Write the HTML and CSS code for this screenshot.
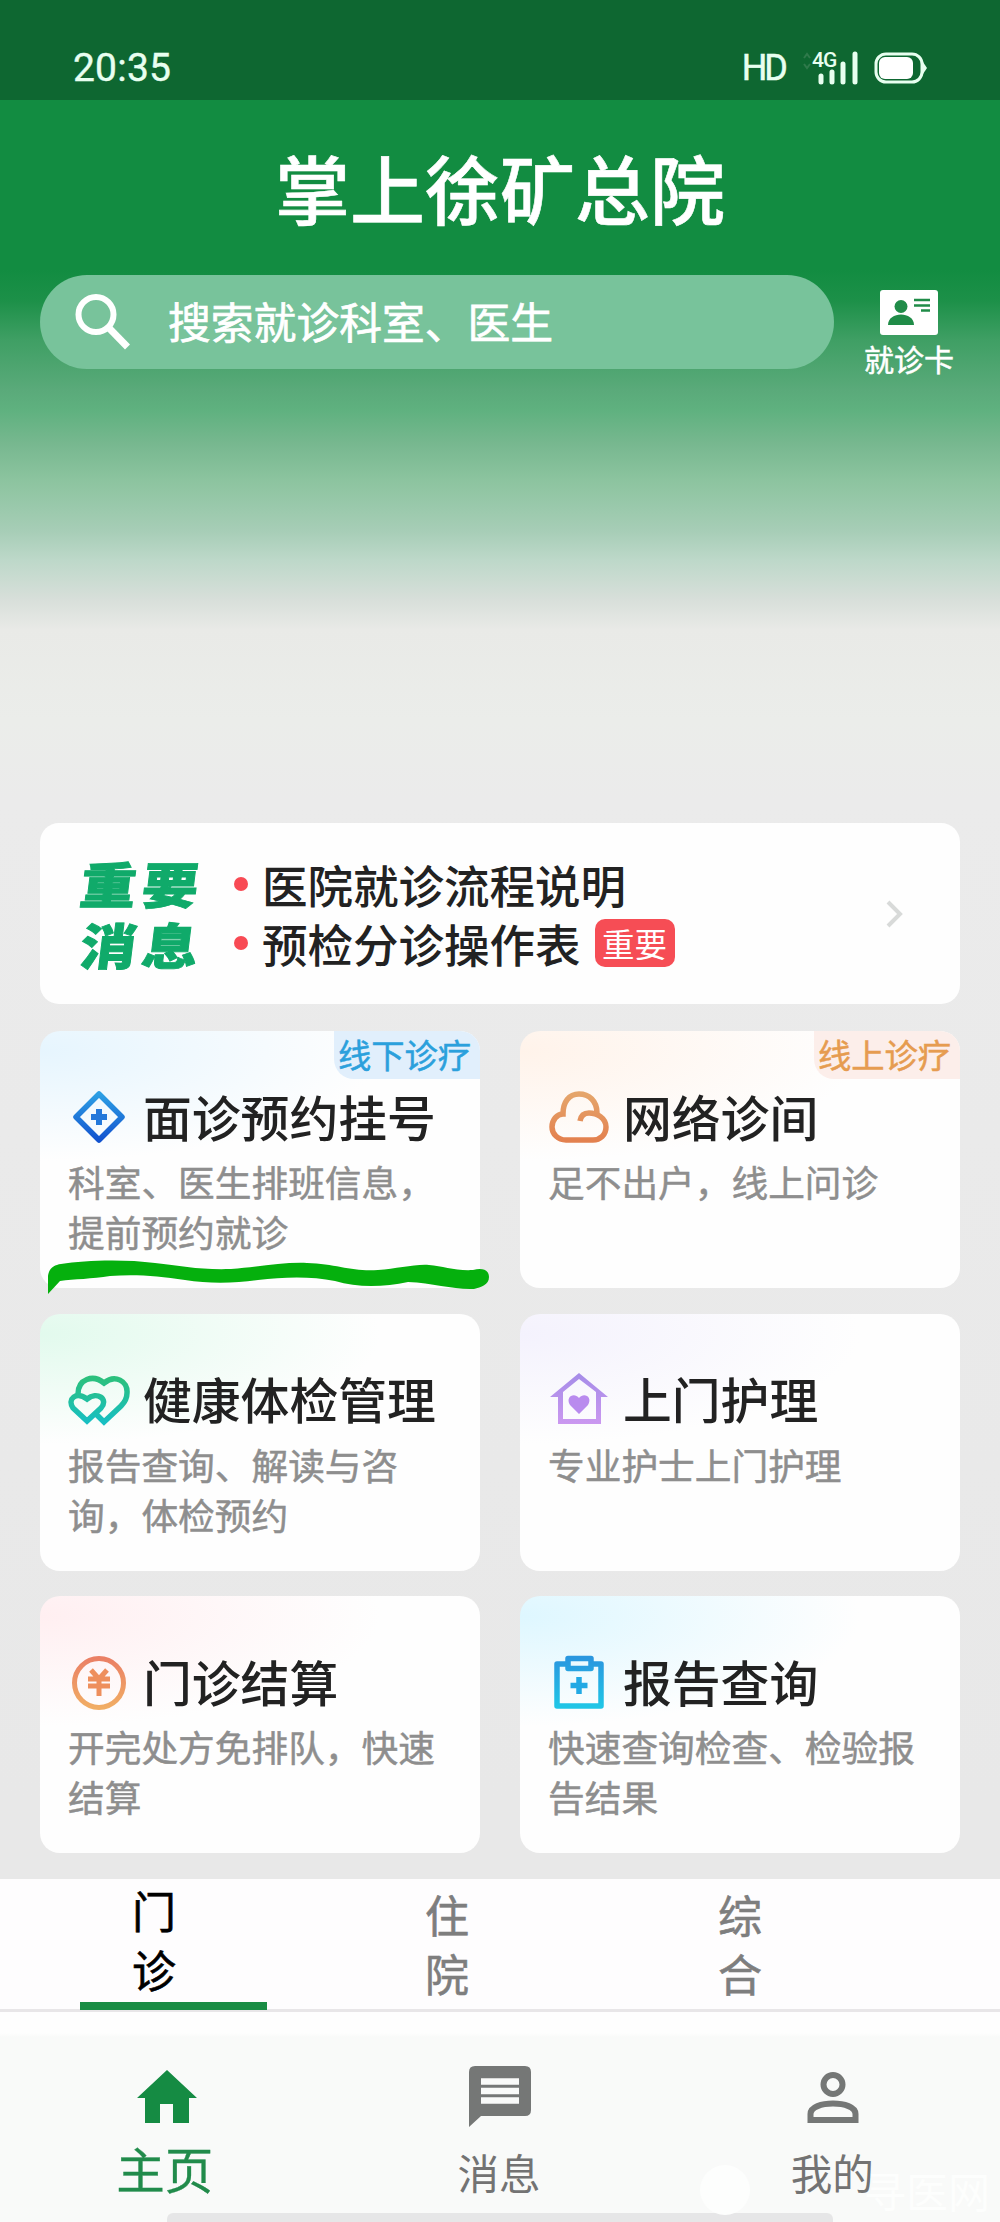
FILE: index.html
```html
<!DOCTYPE html>
<html lang="zh-CN">
<head>
<meta charset="utf-8">
<title>掌上徐矿总院</title>
<link rel="stylesheet" href="styles.css">
</head>
<body>
<div class="screen">
  <header class="status">
    <span class="clock">20:35</span>
    <span class="hd">HD</span>
    <svg class="signal" width="60" height="36" viewBox="0 0 60 36">
      <path d="M3 8l3-4 3 4M3 14l3 4 3-4" fill="none" stroke="#2f7a4b" stroke-width="2"/>
      <text x="11" y="17" class="net">4G</text>
      <path d="M20 26v6M31 22v10M42 14v18M54 4v28" stroke="#e8fff0" stroke-width="5" stroke-linecap="round"/>
    </svg>
    <svg class="battery" width="54" height="34" viewBox="0 0 54 34">
      <rect x="2" y="3" width="46" height="28" rx="10" fill="none" stroke="#e8fff0" stroke-width="3"/>
      <rect x="5" y="6" width="34" height="22" rx="6" fill="#fff"/>
      <path d="M49 11l4 6-4 6z" fill="#e8fff0"/>
    </svg>
  </header>

  <section class="hero">
    <h1>掌上徐矿总院</h1>
    <div class="search-row">
      <div class="search">
        <svg width="58" height="58" viewBox="0 0 58 58" fill="none" stroke="#fff" stroke-width="6">
          <circle cx="22" cy="21.500" r="17.500"/><path d="M35 35l18.500 19" stroke-width="7"/>
        </svg>
        <span>搜索就诊科室、医生</span>
      </div>
      <div class="card-link">
        <svg width="60" height="46" viewBox="0 0 60 46">
          <rect x="1" width="58" height="45" rx="3" fill="#fff"/>
          <circle cx="22" cy="16.500" r="6.500" fill="#208c48"/>
          <path d="M9 35c0-14 26-14 26 0z" fill="#208c48"/>
          <path d="M35 10h16M35 15.500h16M42 20.500h9" stroke="#208c48" stroke-width="2.500"/>
        </svg>
        <span>就诊卡</span>
      </div>
    </div>
  </section>

  <main class="content">
    <section class="notice">
      <div class="notice-title"><span>重要</span><span>消息</span></div>
      <ul class="notice-list">
        <li>医院就诊流程说明</li>
        <li>预检分诊操作表<b class="badge">重要</b></li>
      </ul>
      <svg class="chevron" width="20" height="28" viewBox="0 0 20 28"><path d="M3 2l12 12L3 26" fill="none" stroke="#d8dad9" stroke-width="4"/></svg>
    </section>

    <section class="grid">
      <article class="tile blue">
        <span class="tag">线下诊疗</span>
        <div class="tile-head">
          <svg width="62" height="56" viewBox="0 0 62 56">
            <defs><linearGradient id="g1" x1="0" y1="0" x2="0" y2="1"><stop offset="0" stop-color="#2d9fe4"/><stop offset="1" stop-color="#1253cf"/></linearGradient></defs>
            <path d="M31 5L54 28 31 51 8 28z" fill="none" stroke="url(#g1)" stroke-width="5.500" stroke-linejoin="round"/>
            <path d="M31 20v16M23 28h16" stroke="#2478da" stroke-width="6"/>
          </svg>
          <h2>面诊预约挂号</h2>
        </div>
        <p>科室、医生排班信息，<br>提前预约就诊</p>
        <svg class="marker" width="446" height="36" viewBox="0 0 446 36"><path d="M1 35V17C2 9 7 6 14 5C38 1 78 0 108 4C134 7 153 11 184 10C213 8 236 3 260 4C290 5 306 13 331 11C350 10 367 5 382 6C396 7 408 12 426 11C437 8 442 12 442 18C442 26 434 28 427 30C407 31 387 24 361 23C337 28 311 29 288 22C264 17 236 18 211 21C190 24 163 25 138 21C111 17 89 15 63 17C45 20 27 20 13 22Z" fill="#05b00d"/></svg>
      </article>
      <article class="tile orange">
        <span class="tag">线上诊疗</span>
        <div class="tile-head">
          <svg width="62" height="56" viewBox="0 0 62 56" fill="none">
            <defs><linearGradient id="g2" x1="0" y1="0" x2="0" y2="1"><stop offset="0" stop-color="#e5a56b"/><stop offset="1" stop-color="#e3814f"/></linearGradient></defs>
            <path d="M32 32C33 26 37 24 41 24C49 24 58 29 58 38C58 46 52 51 45 51H18C10 51 4 45 4 38C4 31 9 25 15 25C15 13 21 5 31 5C41 5 49 12 49 24" stroke="url(#g2)" stroke-width="5.500"/>
          </svg>
          <h2>网络诊间</h2>
        </div>
        <p>足不出户，线上问诊</p>
      </article>
      <article class="tile green">
        <div class="tile-head">
          <svg width="62" height="56" viewBox="0 0 62 56" fill="none">
            <defs><linearGradient id="g3" x1="0" y1="0" x2="0" y2="1"><stop offset="0" stop-color="#2bc07d"/><stop offset="1" stop-color="#17bfc2"/></linearGradient></defs>
            <path d="M10 22C10 7 25 2 36 11C47 2 60 9 59 21C59 26 56 31 53 34L36 50L29 43M19 49L5 36C-1 27 8 19 19 27C29 19 41 27 33 36Z" stroke="url(#g3)" stroke-width="5.500"/>
          </svg>
          <h2>健康体检管理</h2>
        </div>
        <p>报告查询、解读与咨询，体检预约</p>
      </article>
      <article class="tile purple">
        <div class="tile-head">
          <svg width="62" height="56" viewBox="0 0 62 56">
            <defs><linearGradient id="g4" x1="0" y1="0" x2="0" y2="1"><stop offset="0" stop-color="#a58ce8"/><stop offset="1" stop-color="#cb98f0"/></linearGradient></defs>
            <path d="M31 1L60 25H53V52H10V25H2zM31 7L15 20V47H48V20z" fill="url(#g4)" fill-rule="evenodd"/>
            <path d="M31 42L22 33C17 25 26 20 31 26C36 20 45 25 40 33z" fill="#b98bee"/>
          </svg>
          <h2>上门护理</h2>
        </div>
        <p>专业护士上门护理</p>
      </article>
      <article class="tile red">
        <div class="tile-head">
          <svg width="62" height="56" viewBox="0 0 62 56" fill="none">
            <defs><linearGradient id="g5" x1="0" y1="0" x2="0" y2="1"><stop offset="0" stop-color="#ea8065"/><stop offset="1" stop-color="#f1ad64"/></linearGradient></defs>
            <circle cx="31" cy="29" r="24.500" stroke="url(#g5)" stroke-width="5"/>
            <path d="M23 16l8 9 8-9M20 25h22M20 32h22M31 25v17" stroke="#ee8f5c" stroke-width="5"/>
          </svg>
          <h2>门诊结算</h2>
        </div>
        <p>开完处方免排队，快速结算</p>
      </article>
      <article class="tile cyan">
        <div class="tile-head">
          <svg width="62" height="56" viewBox="0 0 62 56" fill="none">
            <defs><linearGradient id="g6" x1="0" y1="0" x2="0" y2="1"><stop offset="0" stop-color="#2a97df"/><stop offset="1" stop-color="#20c5e6"/></linearGradient></defs>
            <path d="M18 10H9V52H53V10H44M20 4.500H43V14.500H20z" stroke="url(#g6)" stroke-width="5.500" stroke-linejoin="round"/>
            <path d="M31 23v17M22.500 31.500h17" stroke="#22a9e4" stroke-width="5.500"/>
          </svg>
          <h2>报告查询</h2>
        </div>
        <p>快速查询检查、检验报告结果</p>
      </article>
    </section>
  </main>

  <nav class="tabs">
    <span class="tab active">门<br>诊</span>
    <span class="tab">住<br>院</span>
    <span class="tab">综<br>合</span>
  </nav>

  <footer class="bottom-nav">
    <div class="nav-item on">
      <svg width="62" height="62" viewBox="0 0 62 62"><path d="M31 4L61 32H53V57H37V38H24V57H9V32H1z" fill="#158b43"/></svg>
      <span>主页</span>
    </div>
    <div class="nav-item">
      <svg width="62" height="62" viewBox="0 0 62 62"><path d="M6 0H56Q62 0 62 6V44Q62 50 56 50H12L0 61V6Q0 0 6 0z" fill="#757776"/><path d="M12 15.500H50M12 25H50M12 34.500H50" stroke="#f9faf9" stroke-width="6.500"/></svg>
      <span>消息</span>
    </div>
    <div class="nav-item">
      <svg width="62" height="62" viewBox="0 0 62 62" fill="none" stroke="#757776" stroke-width="6"><circle cx="31" cy="18.500" r="9.500"/><path d="M8.500 54V48C8.500 34 53.500 34 53.500 48V54z"/></svg>
      <span>我的</span>
    </div>
    <i class="home-bar"></i>
    <div class="watermark"><i></i><span>寻医网</span></div>
  </footer>
</div>
</body>
</html>
```

FILE: styles.css
```css
* { box-sizing: border-box; }
body {
  margin: 0;
  font-family: "Noto Sans CJK SC", sans-serif;
  color: #222;
}
h1, h2, p, ul { margin: 0; padding: 0; }
svg { display: block; flex: none; }
.screen {
  width: 1000px;
  height: 2222px;
  display: flex;
  flex-direction: column;
  overflow: hidden;
  background: linear-gradient(#128c41 0, #128c41 270px, #1c9048 300px, #3f9f64 340px, #5aaa7a 390px, #5fb17f 410px, #78b890 445px, #8cc49f 480px, #a6cdb6 530px, #bdd8c9 560px, #d8dfda 600px, #e9eae7 630px, #ebedea 720px, #ebebeb 800px, #e8e8e8 1800px);
}

.status {
  height: 100px;
  flex: none;
  display: flex;
  align-items: center;
  padding: 36px 72px 0 73px;
  background: #0e6731;
  color: #e8fff0;
  font-family: Roboto, sans-serif;
}
.clock { flex: 1; font-size: 39px; letter-spacing: .2px; -webkit-text-stroke: .4px; }
.hd { font-size: 36px; margin-right: 13px; letter-spacing: -3px; padding-right: 3px; -webkit-text-stroke: .5px; }
.signal { margin-right: 13px; }
.net { font: 500 21px/1 Roboto, sans-serif; fill: #e8fff0; letter-spacing: -1px; }

.hero { height: 723px; flex: none; padding-top: 45px; color: #fff; }
h1 { text-align: center; font-size: 75px; line-height: 84px; font-weight: 500; padding-left: 0; -webkit-text-stroke: .6px; }
.search-row { display: flex; margin-top: 46px; padding-left: 40px; }
.search {
  width: 794px;
  height: 94px;
  border-radius: 47px;
  background: #78c39b;
  display: flex;
  align-items: center;
  gap: 36px;
  padding-left: 34px;
  font-size: 42.800px;
  -webkit-text-stroke: .7px;
}
.search span { line-height: 60px; padding-bottom: 5px; }
.card-link { width: 150px; display: flex; flex-direction: column; align-items: center; padding-top: 15px; font-size: 30px; line-height: 44px; -webkit-text-stroke: .5px; }

.content { padding: 0 40px; height: 1056px; flex: none; }
.notice {
  height: 181px;
  border-radius: 19px;
  background: #fefefe;
  display: flex;
  align-items: center;
  padding: 0 55px 0 41px;
}
.notice-title { display: flex; flex-direction: column; width: 153px; }
.notice-title span {
  width: 124px;
  font-size: 56px;
  line-height: 61px;
  font-weight: 900;
  letter-spacing: 6px;
  color: #10aa6a;
  -webkit-text-stroke: 1px #10aa6a;
  transform: translateY(-1px) skewX(-7deg) scaleY(.88);
}
.notice-list { list-style: none; flex: 1; font-size: 45.500px; font-weight: 500; line-height: 59px; }
.notice-list li { display: flex; align-items: center; height: 59px; }
.notice-list li::before { content: ""; width: 14px; height: 14px; border-radius: 50%; background: #f84a54; margin-right: 14px; flex: none; }
.badge { margin-left: 14px; width: 80px; height: 48px; line-height: 48px; border-radius: 10px; text-align: center; font-size: 32.500px; font-weight: 400; color: #fff; background: #f64d55; }

.grid { display: grid; grid-template-columns: 440px 440px; grid-auto-rows: 257px; column-gap: 40px; row-gap: 25.500px; margin-top: 27px; }
.tile { position: relative; border-radius: 20px; background: #fefefe; padding: 58px 20px 0 28px; }
.blue { background: radial-gradient(ellipse 340px 110px at 0 20px, #e6f5fe, #fefefe); }
.orange { background: radial-gradient(ellipse 340px 110px at 0 20px, #fff3ea, #fefefe); }
.green { background: radial-gradient(ellipse 340px 110px at 0 20px, #e2faed, #fefefe); }
.purple { background: radial-gradient(ellipse 340px 110px at 0 20px, #f4f2fd, #fefefe); }
.red { background: radial-gradient(ellipse 340px 110px at 0 20px, #ffeff1, #fefefe); }
.cyan { background: radial-gradient(ellipse 340px 110px at 0 20px, #def7ff, #fefefe); }
.tile-head { display: flex; align-items: center; gap: 13px; height: 56px; }
h2 { font-size: 48.800px; line-height: 56px; font-weight: 500; white-space: nowrap; padding-bottom: 3px; }
.tile p { margin-top: 11px; font-size: 36.700px; line-height: 50px; color: #8e8e8e; -webkit-text-stroke: .5px; }
.tag {
  position: absolute;
  top: 0;
  right: 0;
  width: 146px;
  height: 48px;
  border-radius: 0 20px 0 20px;
  font-size: 33.300px;
  line-height: 46px;
  text-align: center;
  padding-right: 5px;
  white-space: nowrap;
  background: #e1effc;
  color: #2ba0dc;
  -webkit-text-stroke: .5px;
}
.orange .tag { background: #fceeea; color: #e69c50; }
.marker { position: absolute; left: 7px; top: 228px; z-index: 1; }

.tabs { flex: none; height: 133px; background: #fefdfe; border-bottom: 3px solid #e8e6e8; display: flex; padding-left: 80px; -webkit-text-stroke: .6px; }
.tab { width: 187px; height: 132px; margin-right: 106px; padding: 6px 39px 0 0; text-align: center; font-size: 44px; line-height: 59px; color: #7e7e7e; }
.active { height: 131px; padding-top: 2px; color: #000; border-bottom: 8px solid #198c44; }

.bottom-nav { flex: 1; position: relative; display: flex; background: linear-gradient(#fefefe 0, #fefefe 21px, #f9faf9 25px); padding-top: 54px; }
.nav-item { width: 333.300px; display: flex; flex-direction: column; align-items: center; font-size: 41.500px; color: #737373; }
.nav-item span { line-height: 60px; margin-top: 14px; margin-right: 2px; }
.nav-item.on { color: #218b4b; font-size: 48.500px; }
.nav-item.on span { margin-top: 10px; margin-right: 4px; -webkit-text-stroke: .3px; }
.home-bar { position: absolute; left: 167px; bottom: 0; width: 666px; height: 9px; border-radius: 6px 6px 0 0; background: #e6e6e7; }
.watermark {
  position: absolute;
  right: 10px;
  bottom: 4px;
  width: 290px;
  display: flex;
  align-items: center;
  justify-content: space-between;
  font-size: 42px;
  line-height: 56px;
  color: #fdfefd;
}
.watermark i { width: 50px; height: 50px; border-radius: 50%; background: #fdfefd; }
```
